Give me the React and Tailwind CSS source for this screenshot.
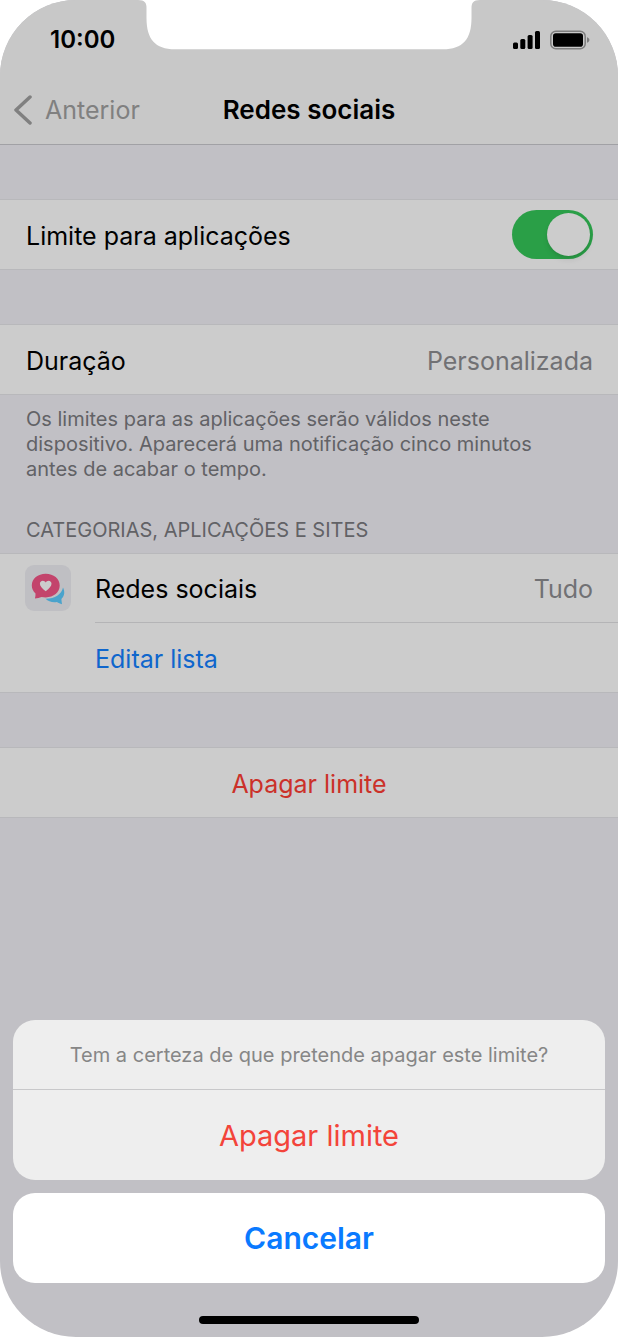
import { useState } from "react";

function Notch() {
  return (
    <svg
      className="absolute top-0 left-1/2 -translate-x-1/2"
      width="342"
      height="50"
      viewBox="0 0 342 50"
      fill="#fff"
      aria-hidden="true"
    >
      <path d="M0 0C7 0 8.500 3 8.500 8V18C8.500 39 17 49.300 37 49.300H305C325 49.300 333.500 39 333.500 18V8C333.500 3 335 0 342 0Z" />
    </svg>
  );
}

function SignalIcon() {
  return (
    <svg width="27" height="18" viewBox="0 0 27 18" aria-hidden="true">
      <rect x="0" y="11.500" width="5" height="6.500" rx="1.500" />
      <rect x="7.300" y="8" width="5" height="10" rx="1.500" />
      <rect x="14.600" y="4" width="5" height="14" rx="1.500" />
      <rect x="22" y="0" width="5" height="18" rx="1.500" />
    </svg>
  );
}

function BatteryIcon() {
  return (
    <svg width="40" height="20" viewBox="0 0 40 20" aria-hidden="true">
      <rect
        x="0.800"
        y="1.200"
        width="34.400"
        height="17.600"
        rx="5"
        fill="none"
        stroke="#7d7d7d"
        strokeWidth="1.500"
      />
      <rect x="3" y="3.300" width="30" height="13.400" rx="2.800" />
      <path d="M37 7.300c1.600.6 2.400 1.500 2.400 2.700s-.8 2.100-2.400 2.700z" fill="#7d7d7d" />
    </svg>
  );
}

function SocialIcon() {
  return (
    <svg
      width="46"
      height="46"
      viewBox="0 0 46 46"
      className="shrink-0 rounded-[9px] bg-[#bfbfc3]"
      aria-hidden="true"
    >
      <path
        d="M38 22.500c2 4 1.700 8.500-1.600 11.500.1 1.800.3 3.400.6 5.200-2-.6-3.600-1.300-5.200-2.200-4.500.7-8.500-.6-11.300-3.200 9 .2 16-4.300 17.500-11.300z"
        fill="#4aa3cc"
      />
      <path
        d="M20.700 8.800c8 0 14 5 14 11.800s-6 11.800-14 11.800c-1.400 0-2.800-.2-4.100-.5-2 .8-4.300 1.300-6.700 1.500.5-1.700.7-3.300.6-4.900-2.400-2-3.700-4.800-3.700-7.900 0-6.800 6-11.800 13.900-11.800z"
        fill="#c3446c"
      />
      <path
        d="M20.700 26.200c-3.700-2.700-5.800-5-5.800-7.400 0-1.800 1.200-3.100 2.900-3.100 1.200 0 2.300.7 2.900 1.900.6-1.200 1.700-1.900 2.900-1.900 1.700 0 2.900 1.300 2.900 3.100 0 2.400-2.100 4.700-5.800 7.400z"
        fill="#ccc"
      />
    </svg>
  );
}

function Group({ children }) {
  return (
    <div className="border-y border-[#b8b8bb] bg-[#ccc] text-[25px] leading-8">
      {children}
    </div>
  );
}

export default function App() {
  const [enabled, setEnabled] = useState(true);

  return (
    <div className="bg-white font-['Inter',sans-serif] text-black">
      <div className="relative flex min-h-screen flex-col overflow-hidden rounded-[76px] bg-[#c1c0c5]">
        <Notch />

        <header className="border-b border-[#a1a1a5] bg-[#c8c8c8]">
          <div className="flex h-[74px] items-center justify-between pt-[5px] pr-7 pl-[50px]">
            <time className="text-2xl font-semibold">10:00</time>
            <div className="flex items-center gap-[10px]">
              <SignalIcon />
              <BatteryIcon />
            </div>
          </div>
          <nav className="grid h-[70px] grid-cols-[1fr_auto_1fr] items-center px-[14px] pt-px leading-8">
            <a
              href="#anterior"
              className="flex items-center gap-3 text-[25px] text-[#808080]"
            >
              <svg
                width="19"
                height="30"
                viewBox="0 0 19 30"
                fill="none"
                stroke="currentColor"
                strokeWidth="3.500"
                strokeLinecap="round"
                strokeLinejoin="round"
                aria-hidden="true"
              >
                <path d="M16 2 2 15l14 13" />
              </svg>
              Anterior
            </a>
            <h1 className="text-[26px] font-semibold">Redes sociais</h1>
          </nav>
        </header>

        <main className="flex flex-col gap-[54px] pt-[54px]">
          <Group>
            <label className="flex h-[69px] items-center justify-between pr-[25px] pl-[26px]">
              <span className="pt-0.5">Limite para aplicações</span>
              <input
                type="checkbox"
                role="switch"
                checked={enabled}
                onChange={(e) => setEnabled(e.target.checked)}
                className="peer sr-only"
              />
              <span className="flex h-[49px] w-[81px] items-center rounded-full bg-[#a9a9ad] p-[3px] peer-checked:justify-end peer-checked:bg-[#2a9f47]">
                <span className="size-[43px] rounded-full bg-[#ccc] shadow-md" />
              </span>
            </label>
          </Group>

          <div>
            <Group>
              <div className="flex h-[69px] items-center justify-between pt-0.5 pr-[25px] pl-[26px]">
                <span>Duração</span>
                <span className="text-[#717174]">Personalizada</span>
              </div>
            </Group>

            <p className="pt-3 pr-16 pl-[26px] text-xl leading-[25px] text-[#626266]">
              Os limites para as aplicações serão válidos neste dispositivo.
              Aparecerá uma notificação cinco minutos antes de acabar o tempo.
            </p>

            <h2 className="px-[26px] pt-9 pb-[10px] text-xl leading-[25px] text-[#626266] uppercase">
              Categorias, aplicações e sites
            </h2>

            <Group>
              <div className="flex gap-6 pl-[25px]">
                <div className="flex h-[68px] items-center">
                  <SocialIcon />
                </div>
                <div className="flex-1">
                  <div className="flex h-[69px] items-center justify-between border-b border-[#b4b4b6] pt-0.5 pr-[25px]">
                    <span>Redes sociais</span>
                    <span className="text-[#717174]">Tudo</span>
                  </div>
                  <button
                    type="button"
                    className="flex h-[69px] w-full items-center pt-0.5 text-left text-[#0f66cc]"
                  >
                    Editar lista
                  </button>
                </div>
              </div>
            </Group>
          </div>

          <Group>
            <button type="button" className="h-[69px] w-full pt-0.5 text-[#cb3129]">
              Apagar limite
            </button>
          </Group>
        </main>

        <section
          role="dialog"
          aria-labelledby="sheet-title"
          className="mt-auto flex flex-col gap-[13px] px-[13px] pt-10 pb-[33px]"
        >
          <div className="overflow-hidden rounded-[22px] bg-[#eee]">
            <h2
              id="sheet-title"
              className="flex h-[70px] items-center justify-center border-b border-[#c8c8ca] pt-px text-xl text-[#868686]"
            >
              Tem a certeza de que pretende apagar este limite?
            </h2>
            <button type="button" className="h-[90px] w-full pt-px text-[29px] text-[#f3443a]">
              Apagar limite
            </button>
          </div>
          <button
            type="button"
            className="h-[90px] w-full rounded-[22px] bg-white pt-px text-[30px] font-semibold text-[#0a7aff]"
          >
            Cancelar
          </button>
        </section>

        <div className="mx-auto mb-[13px] h-2 w-[220px] rounded-full bg-black" />
      </div>
    </div>
  );
}
